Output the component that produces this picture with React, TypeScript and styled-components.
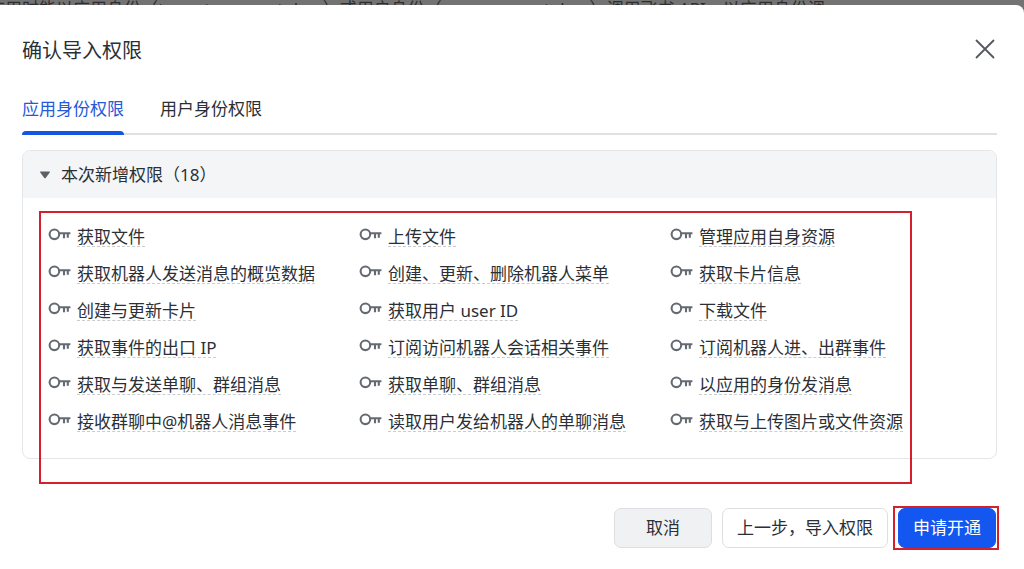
import React from 'react';
import styled, { createGlobalStyle, css } from 'styled-components';

const GlobalStyle = createGlobalStyle`
  *, *::before, *::after { box-sizing: border-box; }
  body {
    margin: 0;
    background: #737373;
    color: #2b2f36;
    font-family: 'Noto Sans', 'Noto Sans CJK SC', sans-serif;
    font-size: 17px;
    line-height: 24px;
  }
  button { font: inherit; color: inherit; cursor: pointer; }
`;

const Page = styled.div`
  min-height: 100vh;
  display: flex;
  flex-direction: column;
`;

const Backdrop = styled.p`
  margin: 0;
  height: 5px;
  overflow: hidden;
  white-space: nowrap;
  color: #2e2e2e;
  text-indent: -12px;
  line-height: 18px;
`;

const Dialog = styled.section`
  flex: 1;
  background: #fff;
  border-radius: 0 8px 0 0;
  padding: 28px 27px 20px 22px;
`;

const Header = styled.header`
  display: flex;
  align-items: center;
  justify-content: space-between;
  height: 32px;
`;

const Title = styled.h1`
  margin: 0;
  padding-top: 4px;
  font-size: 20px;
  font-weight: 400;
  line-height: 32px;
`;

const CloseButton = styled.button`
  display: flex;
  padding: 2px;
  border: 0;
  background: none;
  color: #55585e;
`;

const Tabs = styled.div`
  display: flex;
  gap: 36px;
  margin-top: 28px;
  border-bottom: 2px solid #dee0e3;
`;

const Tab = styled.button<{ $active?: boolean }>`
  display: flex;
  flex-direction: column;
  gap: 10px;
  padding: 4px 0 0;
  margin-bottom: -2px;
  border: 0;
  background: none;
  color: ${p => (p.$active ? '#2459d8' : '#2b2f36')};

  &::after {
    content: '';
    align-self: stretch;
    height: 4px;
    border-radius: 4px 4px 0 0;
    background: ${p => (p.$active ? '#1456e0' : 'transparent')};
  }
`;

const Panel = styled.section`
  margin-top: 15px;
  border: 1px solid #e4e6e9;
  border-radius: 8px;
`;

const PanelHeader = styled.button`
  display: flex;
  align-items: center;
  gap: 10px;
  width: 100%;
  height: 47px;
  padding: 0 16px;
  border: 0;
  border-radius: 7px 7px 0 0;
  background: #f4f5f7;
`;

const PermissionFrame = styled.div`
  margin: 13px 84px -26px 16px;
  height: 273px;
  padding: 12px 0 0 7px;
  border: 2px solid #d4202c;
`;

const PermissionGrid = styled.ul`
  display: grid;
  grid-template-columns: 311px 311px auto;
  grid-auto-rows: 37px;
  margin: 0;
  padding: 0;
  list-style: none;
  white-space: nowrap;
`;

const Permission = styled.li`
  display: flex;
  align-items: flex-start;
  gap: 5px;
`;

const PermissionName = styled.span`
  height: 22px;
  line-height: 24px;
  border-bottom: 1px dashed #c9ccd1;
`;

const Footer = styled.footer`
  display: flex;
  align-items: center;
  justify-content: flex-end;
  margin: 47px -2px 0 0;
`;

const Button = styled.button<{ $kind?: 'muted' | 'primary' }>`
  display: block;
  height: 40px;
  min-width: 98px;
  padding: 0 14px;
  border: 1px solid #dcdee2;
  border-radius: 7px;
  background: #fff;
  white-space: nowrap;
  ${p => p.$kind === 'muted' && css`background: #f0f1f3;`}
  ${p => p.$kind === 'primary' && css`
    background: #1456f0;
    border-color: #1456f0;
    color: #fff;
  `}
  & + & { margin-left: 10px; }
`;

const ButtonFrame = styled.div`
  margin-left: 5px;
  padding: 0 1px 0 3px;
  border: 2px solid #d4202c;
`;

const KeyIcon = () => (
  <svg width="24" height="20" viewBox="0 0 24 20" fill="none" stroke="#646a73" strokeWidth="2.1" aria-hidden="true">
    <circle cx="6.4" cy="9.3" r="4.8" />
    <path d="M11 8.2H22.4M16 8.2V13.2M19.8 8.2V12.8" />
  </svg>
);

const permissions = [
  '获取文件', '上传文件', '管理应用自身资源',
  '获取机器人发送消息的概览数据', '创建、更新、删除机器人菜单', '获取卡片信息',
  '创建与更新卡片', '获取用户 user ID', '下载文件',
  '获取事件的出口 IP', '订阅访问机器人会话相关事件', '订阅机器人进、出群事件',
  '获取与发送单聊、群组消息', '获取单聊、群组消息', '以应用的身份发消息',
  '接收群聊中@机器人消息事件', '读取用户发给机器人的单聊消息', '获取与上传图片或文件资源',
];

export default function App() {
  return (
    <>
      <GlobalStyle />
      <Page>
        <Backdrop>应用时能以应用身份（tenant_access_token）或用户身份（user_access_token）调用飞书 API，以应用身份调</Backdrop>
        <Dialog role="dialog" aria-labelledby="dialog-title">
          <Header>
            <Title id="dialog-title">确认导入权限</Title>
            <CloseButton type="button" aria-label="关闭">
              <svg width="20" height="20" viewBox="0 0 20 20" fill="none" stroke="currentColor" strokeWidth="1.8" strokeLinecap="round">
                <path d="M1.5 1.5L18.5 18.5M18.5 1.5L1.5 18.5" />
              </svg>
            </CloseButton>
          </Header>
          <Tabs role="tablist">
            <Tab type="button" role="tab" aria-selected="true" $active>应用身份权限</Tab>
            <Tab type="button" role="tab" aria-selected="false">用户身份权限</Tab>
          </Tabs>
          <Panel>
            <PanelHeader type="button" aria-expanded="true">
              <svg width="12" height="8" viewBox="0 0 12 8" fill="#5c6066" aria-hidden="true">
                <path d="M1.6 0.5H10.4Q11.4 0.6 10.7 1.6L6.7 6.9Q6 7.6 5.3 6.9L1.3 1.6Q0.6 0.6 1.6 0.5Z" />
              </svg>
              <span>本次新增权限（18）</span>
            </PanelHeader>
            <PermissionFrame>
              <PermissionGrid>
                {permissions.map(name => (
                  <Permission key={name}>
                    <KeyIcon />
                    <PermissionName>{name}</PermissionName>
                  </Permission>
                ))}
              </PermissionGrid>
            </PermissionFrame>
          </Panel>
          <Footer>
            <Button type="button" $kind="muted">取消</Button>
            <Button type="button">上一步，导入权限</Button>
            <ButtonFrame>
              <Button type="button" $kind="primary">申请开通</Button>
            </ButtonFrame>
          </Footer>
        </Dialog>
      </Page>
    </>
  );
}
